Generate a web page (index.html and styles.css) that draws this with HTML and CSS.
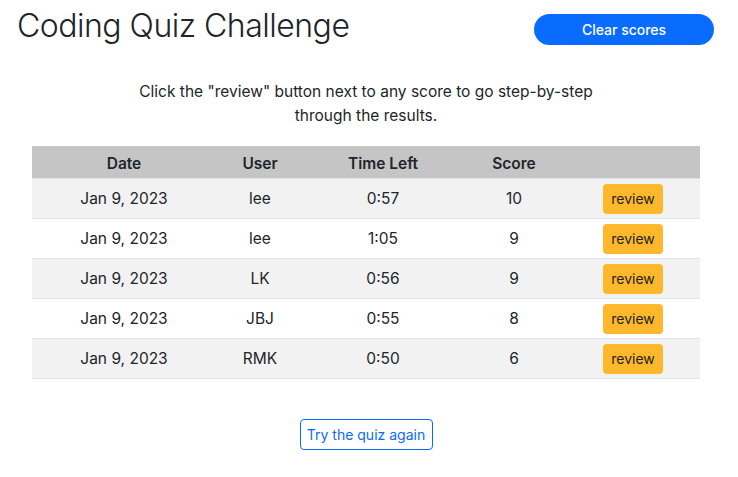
FILE: index.html
```html
<!DOCTYPE html>
<html lang="en">
<head>
<meta charset="utf-8">
<title>Coding Quiz Challenge</title>
<link rel="stylesheet" href="styles.css">
</head>
<body>
<header class="top">
  <h1 class="title">Coding Quiz Challenge</h1>
  <button class="btn-clear">Clear scores</button>
</header>
<main class="content">
  <p class="intro">Click the "review" button next to any score to go step-by-step<br>through the results.</p>
  <table class="scores">
    <colgroup>
      <col class="c-date"><col class="c-user"><col class="c-time"><col class="c-score"><col class="c-act">
    </colgroup>
    <thead>
      <tr><th>Date</th><th>User</th><th>Time Left</th><th>Score</th><th></th></tr>
    </thead>
    <tbody>
      <tr><td>Jan 9, 2023</td><td>lee</td><td>0:57</td><td>10</td><td><button class="btn-review">review</button></td></tr>
      <tr><td>Jan 9, 2023</td><td>lee</td><td>1:05</td><td>9</td><td><button class="btn-review">review</button></td></tr>
      <tr><td>Jan 9, 2023</td><td>LK</td><td>0:56</td><td>9</td><td><button class="btn-review">review</button></td></tr>
      <tr><td>Jan 9, 2023</td><td>JBJ</td><td>0:55</td><td>8</td><td><button class="btn-review">review</button></td></tr>
      <tr><td>Jan 9, 2023</td><td>RMK</td><td>0:50</td><td>6</td><td><button class="btn-review">review</button></td></tr>
    </tbody>
  </table>
  <div class="again-wrap"><button class="btn-again">Try the quiz again</button></div>
</main>
</body>
</html>
```
FILE: styles.css
```css
* { box-sizing: border-box; }
html, body { margin: 0; padding: 0; background: #fff; }
body {
  font-family: Inter, "Helvetica Neue", Arial, sans-serif;
  color: #212529;
  font-size: 16px;
  line-height: 1.5;
}
.top {
  display: flex;
  justify-content: space-between;
  align-items: flex-start;
  padding: 0 24px 0 17px;
}
.title {
  margin: 6px 0 0 0;
  font-size: 32px;
  font-weight: 300;
  line-height: 40px;
  letter-spacing: -0.5px;
}
.btn-clear {
  margin-top: 14px;
  width: 180px;
  height: 31px;
  border: none;
  border-radius: 16px;
  background: #0a6cff;
  color: #fff;
  font-family: inherit;
  font-size: 14px;
  font-weight: 500;
}
.content {
  padding: 0 38px 0 32px;
}
.intro {
  margin: 34px 0 18px;
  text-align: center;
  font-size: 15.5px;
  line-height: 24px;
}
.scores {
  width: 668px;
  border-collapse: collapse;
  table-layout: fixed;
  font-size: 15.5px;
}
.c-date { width: 184px; }
.c-user { width: 88px; }
.c-time { width: 158px; }
.c-score { width: 104px; }
.c-act { width: 134px; }
.scores th {
  background: #c5c5c5;
  height: 32px;
  font-weight: 600;
  text-align: center;
  border-bottom: 1px solid #dde3ea;
  padding: 3px 0 0;
}
.scores td {
  height: 40px;
  text-align: center;
  padding: 1px 0 0;
  border-bottom: 1px solid #dde3ea;
}
.scores tbody tr:nth-child(odd) td { background: #f2f2f2; }
.btn-review {
  width: 60px;
  height: 30px;
  border: none;
  border-radius: 4px;
  background: #ffb82b;
  color: #212529;
  font-family: inherit;
  font-size: 14px;
  padding: 0;
  vertical-align: middle;
}
.again-wrap {
  display: flex;
  justify-content: center;
  padding: 40px 0 0 0;
}
.btn-again {
  width: 133px;
  height: 31px;
  border: 1px solid #0a6cff;
  border-radius: 4px;
  background: #fff;
  color: #0a6cff;
  font-family: inherit;
  font-size: 14px;
  padding: 0;
}
```
